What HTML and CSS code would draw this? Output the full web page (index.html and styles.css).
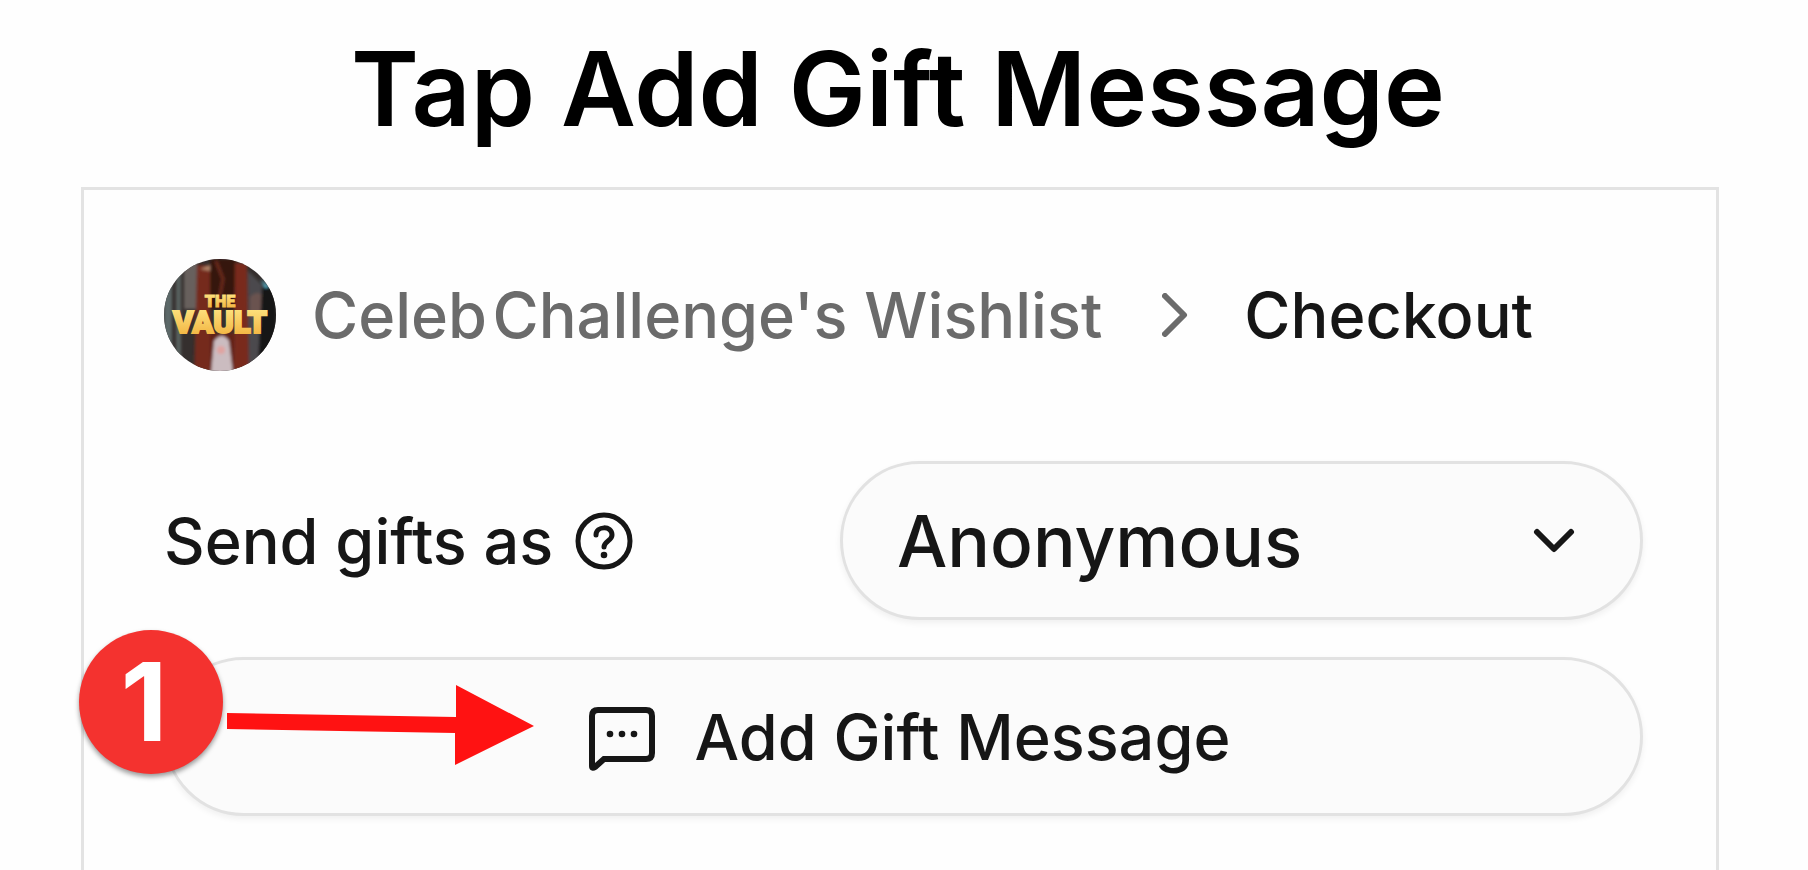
FILE: index.html
```html
<!DOCTYPE html>
<html lang="en">
<head>
    <meta charset="UTF-8">
    <meta name="viewport" content="width=device-width, initial-scale=1.0">
    <title>Tap Add Gift Message</title>
    <link rel="stylesheet" href="styles.css">
</head>
<body>
    <h1 class="title">Tap Add Gift Message</h1>

    <main class="card">
        <nav class="breadcrumb" aria-label="Breadcrumb">
            <a class="wishlist" href="#">
                <svg class="avatar" viewBox="0 0 112 112" aria-hidden="true">
                    <defs>
                        <clipPath id="round"><circle cx="56" cy="56" r="56"/></clipPath>
                        <filter id="soft"><feGaussianBlur stdDeviation="1.5"/></filter>
                        <linearGradient id="gold" x1="0" y1="0" x2="0" y2="1">
                            <stop offset="0" stop-color="#ffe988"/>
                            <stop offset="1" stop-color="#f0ac36"/>
                        </linearGradient>
                    </defs>
                    <g clip-path="url(#round)">
                        <rect width="112" height="112" fill="#352f2e"/>
                        <g filter="url(#soft)">
                            <path d="M0 24h8v90H0z" fill="#5c6768"/>
                            <path d="M12 10h5v100h-5z" fill="#59605f"/>
                            <path d="M20 0h13v50H20z" fill="#68615d"/>
                            <path d="M33 6h13v110H30z" fill="#74291e"/>
                            <path d="M46 0h26v50H46z" fill="#35130f"/>
                            <path d="M52 2l7 18-4 22" stroke="#6b2a1c" stroke-width="3" fill="none"/>
                            <path d="M71 4h12l2 108H70z" fill="#79291f"/>
                            <path d="M84 12l18 18v82H85z" fill="#4c4a4d"/>
                            <path d="M86 38q8-8 14 0v20H86z" fill="#6b5350"/>
                            <path d="M98 28h14v70l-18 6z" fill="#171719"/>
                            <path d="M97 20l8 8-4 1z" fill="#56b7cf"/>
                            <path d="M36 10l10-4v6z" fill="#b08468"/>
                            <path d="M46 74h24v38H46z" fill="#642018"/>
                            <path d="M50 82q8-10 15 0l4 32H47z" fill="#cbbcc0"/>
                            <circle cx="57" cy="91" r="4" fill="#e0a3a0"/>
                        </g>
                    </g>
                    <g class="avatar-text" text-anchor="middle" fill="url(#gold)" stroke="url(#gold)">
                        <text x="56" y="48" font-size="16" stroke-width="1">THE</text>
                        <text x="56" y="74" font-size="31" stroke-width="2">VAULT</text>
                    </g>
                </svg>
                <span>Celeb&#8202;Challenge's Wishlist</span>
            </a>
            <svg class="chevron-right" viewBox="0 0 26 44" aria-hidden="true">
                <path d="M3 3l19 19L3 41"/>
            </svg>
            <span class="current" aria-current="page">Checkout</span>
        </nav>

        <form class="options">
            <div class="sender">
                <label for="send-as">Send gifts as</label>
                <button type="button" class="help" aria-label="About sending gifts">
                    <svg viewBox="0 0 58 58" aria-hidden="true">
                        <circle cx="29" cy="29" r="26"/>
                        <path d="M21 23c0-9 16-10 16 0 0 6-8 6-8 12"/>
                        <circle class="dot" cx="29" cy="43" r="3.3"/>
                    </svg>
                </button>
                <div class="select">
                    <select id="send-as">
                        <option>Anonymous</option>
                    </select>
                    <svg class="chevron-down" viewBox="0 0 42 26" aria-hidden="true">
                        <path d="M4 4l17 17L38 4"/>
                    </svg>
                </div>
            </div>

            <div class="step">
                <button type="button" class="add-message">
                    <svg class="message-icon" viewBox="0 0 66 64" aria-hidden="true">
                        <path d="M3 59V9q0-6 6-6h48q6 0 6 6v37q0 6-6 6H15L6 60q-3 2-3-1z"/>
                        <circle cx="21" cy="27" r="3.3"/>
                        <circle cx="33" cy="27" r="3.3"/>
                        <circle cx="45" cy="27" r="3.3"/>
                    </svg>
                    <span>Add Gift Message</span>
                </button>
                <span class="badge">1</span>
                <svg class="arrow" viewBox="0 0 307 80" aria-hidden="true">
                    <path d="M0 28l229 4V0l78 41-79 39V48L0 44z"/>
                </svg>
            </div>
        </form>
    </main>
</body>
</html>
```
FILE: styles.css
```css
* {
    box-sizing: border-box;
}
body {
    margin: 0;
    display: flex;
    flex-direction: column;
    min-height: 100vh;
    overflow: hidden;
    background: #fefefe;
    color: #161616;
    font-family: Inter, "Liberation Sans", sans-serif;
    font-weight: 500;
    font-size: 63px;
}
svg {
    display: block;
    flex: none;
}
.title {
    margin: 25px 0 34px;
    padding-right: 12px;
    text-align: center;
    color: #000;
    font-size: 103px;
    font-weight: 600;
    line-height: 128px;
}
.card {
    flex: 1;
    margin: 0 89px 0 81px;
    padding: 69px 73px 54px 80px;
    border: 3px solid #e3e3e3;
    border-bottom: 0;
}
.breadcrumb {
    display: flex;
    align-items: center;
    margin-bottom: 90px;
    white-space: nowrap;
}
.wishlist {
    display: flex;
    align-items: center;
    gap: 36px;
    color: #6b6b6b;
    text-decoration: none;
}
.avatar {
    width: 112px;
    height: 112px;
}
.avatar-text {
    font-family: Roboto, sans-serif;
    font-weight: 900;
}
.chevron-right {
    width: 26px;
    height: 44px;
    margin: 0 56px 0 60px;
    fill: none;
    stroke: #6b6b6b;
    stroke-width: 6;
    stroke-linecap: round;
    stroke-linejoin: round;
}
.options {
    display: flex;
    flex-direction: column;
    gap: 37px;
}
.sender {
    display: flex;
    align-items: center;
    white-space: nowrap;
}
.help {
    margin-left: 22px;
    padding: 0;
    border: 0;
    background: none;
}
.help svg {
    width: 58px;
    height: 58px;
    fill: none;
    stroke: #161616;
    stroke-width: 5;
    stroke-linecap: round;
}
.help .dot {
    fill: #161616;
    stroke: none;
}
.select {
    display: grid;
    align-items: center;
    width: 803px;
    margin-left: auto;
}
.select select,
.select svg {
    grid-area: 1 / 1;
}
.select select,
.add-message {
    width: 100%;
    height: 159px;
    border: 3px solid #e2e2e2;
    border-radius: 80px;
    background: #fbfbfb;
    box-shadow: 0 3px 6px rgba(0, 0, 0, 0.06);
    color: inherit;
    font: inherit;
}
.select select {
    appearance: none;
    padding: 0 140px 0 54px;
    font-size: 71px;
}
.chevron-down {
    justify-self: end;
    width: 42px;
    height: 26px;
    margin-right: 68px;
    fill: none;
    stroke: #161616;
    stroke-width: 6;
    stroke-linecap: round;
    stroke-linejoin: round;
    pointer-events: none;
}
.step {
    position: relative;
}
.add-message {
    display: flex;
    align-items: center;
    justify-content: center;
    gap: 40px;
    padding: 0 0 0 12px;
}
.message-icon {
    width: 66px;
    height: 64px;
    margin-top: 4px;
    fill: none;
    stroke: #161616;
    stroke-width: 6;
}
.message-icon circle {
    fill: #161616;
    stroke: none;
}
/* step marker and arrow lie over the button */
.badge {
    position: absolute;
    top: -27px;
    left: -85px;
    width: 144px;
    height: 144px;
    padding-right: 14px;
    border-radius: 50%;
    background: #f4322f;
    box-shadow: 0 3px 5px rgba(0, 0, 0, 0.4);
    color: #fff;
    font-size: 108px;
    font-weight: 700;
    line-height: 144px;
    text-align: center;
}
.arrow {
    position: absolute;
    top: 28px;
    left: 63px;
    width: 307px;
    height: 80px;
    fill: #ff1212;
}
```
